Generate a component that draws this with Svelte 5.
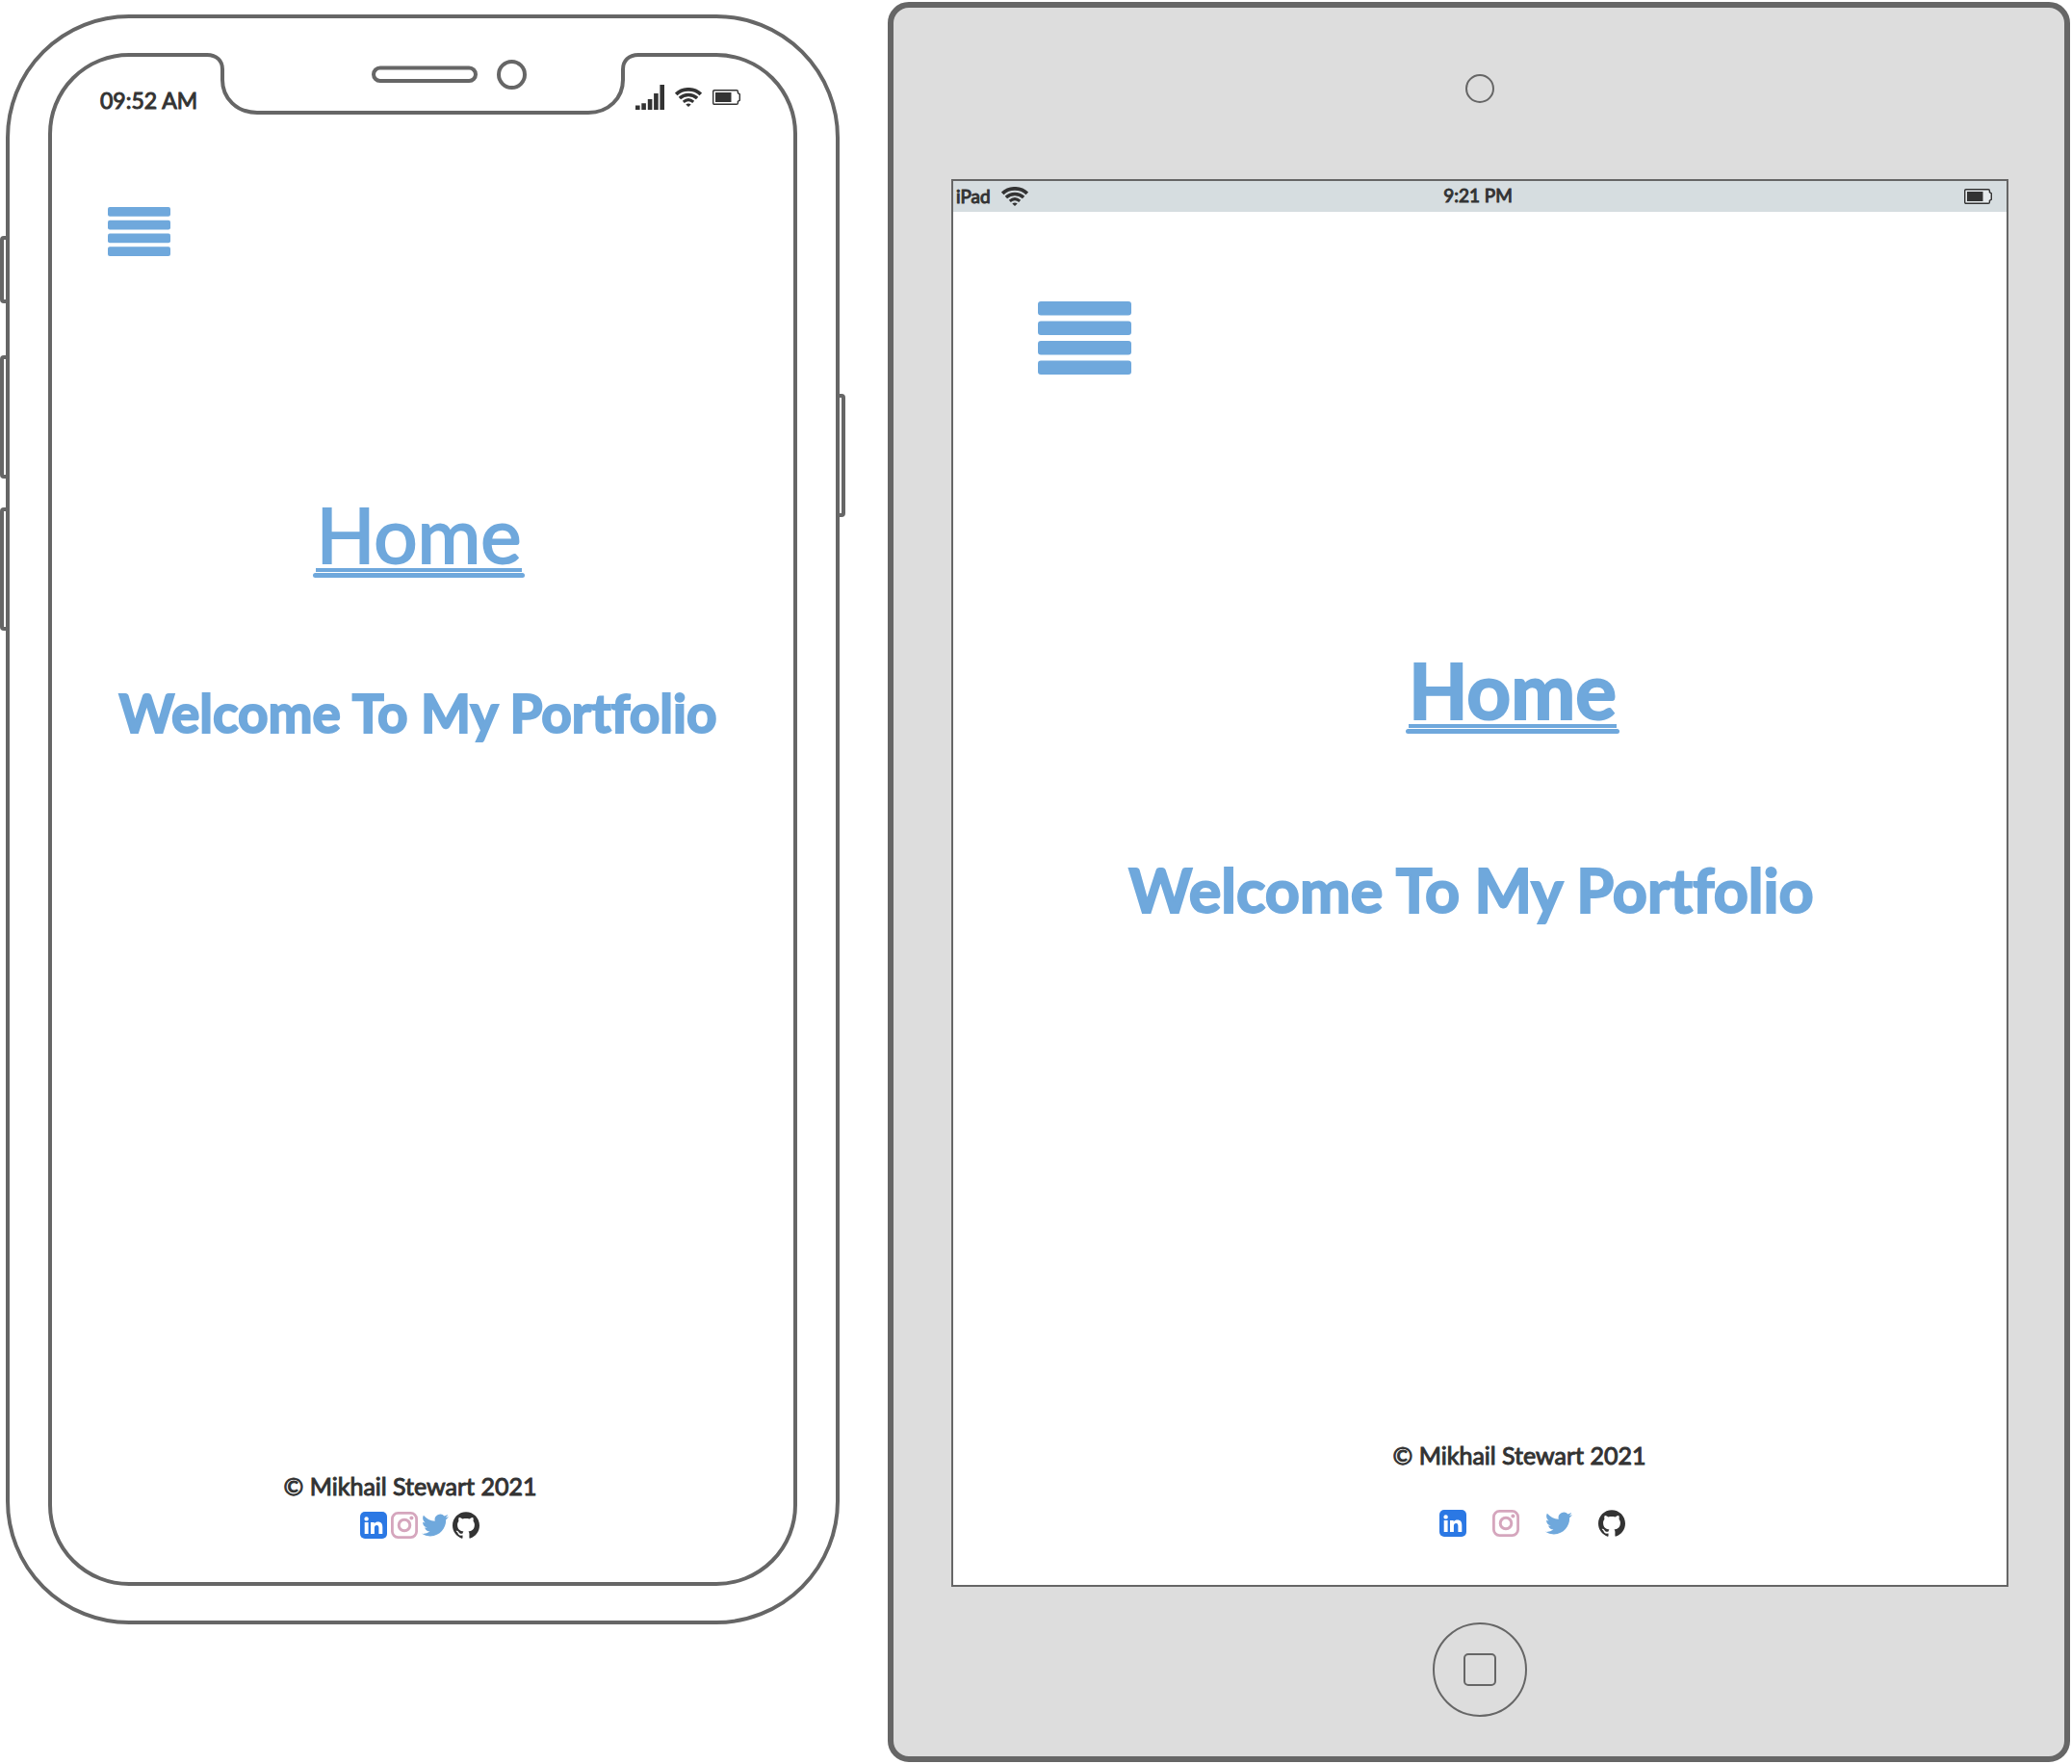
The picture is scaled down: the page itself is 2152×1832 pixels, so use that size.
<script>
  const socials = ['LinkedIn', 'Instagram', 'Twitter', 'GitHub'];
</script>

{#snippet wifi()}
  <svg class="wifi" viewBox="0 0 28 20" role="img" aria-label="Wi-Fi">
    <path d="M1.2 6.9C8 .2 20 .2 26.8 6.9" fill="none" stroke="currentColor" stroke-width="3.8" />
    <path d="M4.9 11C10.2 6.2 17.8 6.2 23.1 11" fill="none" stroke="currentColor" stroke-width="3.5" />
    <path d="M8.8 14.9C12 12.1 16 12.1 19.2 14.9" fill="none" stroke="currentColor" stroke-width="3" />
    <path d="M11.3 17.4Q14 15.4 16.7 17.4L14 20Z" fill="currentColor" />
  </svg>
{/snippet}

{#snippet battery()}
  <svg class="battery" viewBox="0 0 29 16" role="img" aria-label="Battery">
    <path d="M2 .7H25Q26.4 .7 26.4 2V3.6L28.3 4.8V11.2L26.4 12.4V14Q26.4 15.3 25 15.3H2Q.7 15.3 .7 14V2Q.7 .7 2 .7Z" fill="#fff" fill-opacity=".4" stroke="currentColor" stroke-width="1.4" />
    <path d="M3 3H19.5V13H3Z" fill="currentColor" />
  </svg>
{/snippet}

{#snippet menu()}
  <button class="menu" type="button" aria-label="Menu">
    <svg viewBox="0 0 97 76" aria-hidden="true">
      <rect width="97" height="14.5" rx="3" />
      <rect y="20.5" width="97" height="14.5" rx="3" />
      <rect y="41" width="97" height="14.5" rx="3" />
      <rect y="61.5" width="97" height="14.5" rx="3" />
    </svg>
  </button>
{/snippet}

{#snippet footer()}
  <footer>
    <p>© Mikhail Stewart 2021</p>
    <nav aria-label="Social links">
      {#each socials as name}
        <a href="#{name.toLowerCase()}" aria-label={name}>
          {#if name === 'LinkedIn'}
            <svg viewBox="0 0 28 28">
              <rect width="28" height="28" rx="5" fill="#2b78e4" />
              <circle cx="6.6" cy="7.4" r="2.2" fill="#fff" />
              <path d="M4.7 10.9H8.6V23H4.7ZM11 10.9H14.7V12.6C15.6 11.2 17 10.6 18.7 10.6C22 10.6 23.3 12.7 23.3 16V23H19.4V16.8C19.4 15 18.8 13.9 17.3 13.9C15.7 13.9 14.9 15.1 14.9 16.8V23H11Z" fill="#fff" />
            </svg>
          {:else if name === 'Instagram'}
            <svg viewBox="0 0 28 28" fill="none" stroke="#d5a6bd">
              <rect x="1.4" y="1.4" width="25.2" height="25.2" rx="6" stroke-width="2.8" />
              <circle cx="14" cy="14" r="5.8" stroke-width="3" />
              <circle cx="21.4" cy="6.6" r="2" fill="#d5a6bd" stroke="none" />
            </svg>
          {:else if name === 'Twitter'}
            <svg viewBox="0 0 24 24" fill="#6fa8dc">
              <path d="M23.954 4.569a10 10 0 0 1-2.825.775 4.958 4.958 0 0 0 2.163-2.723c-.951.555-2.005.959-3.127 1.184a4.92 4.92 0 0 0-8.384 4.482C7.691 8.094 4.066 6.13 1.64 3.161a4.822 4.822 0 0 0-.666 2.475c0 1.71.87 3.213 2.188 4.096a4.904 4.904 0 0 1-2.228-.616v.061a4.923 4.923 0 0 0 3.946 4.827 4.996 4.996 0 0 1-2.212.085 4.937 4.937 0 0 0 4.604 3.417 9.868 9.868 0 0 1-6.102 2.105c-.39 0-.779-.023-1.17-.067a13.995 13.995 0 0 0 7.557 2.209c9.054 0 13.999-7.496 13.999-13.986 0-.209 0-.42-.015-.63a9.936 9.936 0 0 0 2.46-2.548z" />
            </svg>
          {:else}
            <svg viewBox="0 0 24 24" fill="#333">
              <path d="M12 .297c-6.63 0-12 5.373-12 12 0 5.303 3.438 9.8 8.205 11.385.6.113.82-.258.82-.577 0-.285-.01-1.04-.015-2.04-3.338.724-4.042-1.61-4.042-1.61C4.422 18.07 3.633 17.7 3.633 17.7c-1.087-.744.084-.729.084-.729 1.205.084 1.838 1.236 1.838 1.236 1.07 1.835 2.809 1.305 3.495.998.108-.776.417-1.305.76-1.605-2.665-.3-5.466-1.332-5.466-5.93 0-1.31.465-2.38 1.235-3.22-.135-.303-.54-1.523.105-3.176 0 0 1.005-.322 3.3 1.23.96-.267 1.98-.399 3-.405 1.02.006 2.04.138 3 .405 2.28-1.552 3.285-1.23 3.285-1.23.645 1.653.24 2.873.12 3.176.765.84 1.23 1.91 1.23 3.22 0 4.61-2.805 5.625-5.475 5.92.42.36.81 1.096.81 2.22 0 1.606-.015 2.896-.015 3.286 0 .315.21.69.825.57C20.565 22.092 24 17.592 24 12.297c0-6.627-5.373-12-12-12" />
            </svg>
          {/if}
        </a>
      {/each}
    </nav>
  </footer>
{/snippet}

<main>
  <section class="phone" aria-label="Phone">
    <span class="key mute"></span>
    <span class="key up"></span>
    <span class="key down"></span>
    <span class="key power"></span>
    <div class="screen">
      <header>
        <time>09:52 AM</time>
        <svg class="notch" viewBox="0 0 458 66" aria-hidden="true" fill="#fff" stroke="#666" stroke-width="4">
          <path d="M5 0V2C15 2 21 8 21 17V28C21 47 36 62 57 62H401C422 62 437 47 437 28V17C437 8 443 2 453 2V0Z" stroke="none" />
          <path d="M5 2C15 2 21 8 21 17V28C21 47 36 62 57 62H401C422 62 437 47 437 28V17C437 8 443 2 453 2" fill="none" />
          <rect x="178" y="15.5" width="106" height="13.5" rx="6.75" />
          <circle cx="321.5" cy="22.5" r="13.5" />
        </svg>
        <div class="icons">
          <svg class="signal" viewBox="0 0 30 26" role="img" aria-label="Signal" fill="currentColor">
            <path d="M0 21.5H4.6V26H0ZM6.3 19.3H10.9V26H6.3ZM12.8 15H17.4V26H12.8ZM19.1 9H23.7V26H19.1ZM25.4 0H30V26H25.4Z" />
          </svg>
          {@render wifi()}
          {@render battery()}
        </div>
      </header>
      {@render menu()}
      <h1><span>Home</span></h1>
      <h2>Welcome To My Portfolio</h2>
      {@render footer()}
    </div>
  </section>

  <section class="tablet" aria-label="Tablet">
    <span class="camera"></span>
    <div class="screen">
      <header>
        <div class="carrier">iPad {@render wifi()}</div>
        <time>9:21 PM</time>
        {@render battery()}
      </header>
      {@render menu()}
      <h1><span>Home</span></h1>
      <h2>Welcome To My Portfolio</h2>
      {@render footer()}
    </div>
    <button class="home" type="button" aria-label="Home button"><span></span></button>
  </section>
</main>

<style>
  :global(body) {
    background: #fff;
  }

  main {
    display: grid;
    grid-template-columns: minmax(0, 866fr) minmax(0, 1228fr);
    gap: 50px;
    align-items: start;
    padding: 2px 2px 2px 6px;
    font-family: Lato, 'Open Sans', sans-serif;
    font-variant-ligatures: none;
    color: #333;
  }

  main, section, div, header, button, span {
    box-sizing: border-box;
  }

  svg {
    display: block;
    flex: none;
  }

  section, .screen {
    display: flex;
    flex-direction: column;
  }

  .screen {
    flex: 1;
    background: #fff;
  }

  .phone {
    position: relative;
    aspect-ratio: 866 / 1672;
    margin-top: 13px;
    padding: 36px 40px;
    border: 4px solid #666;
    border-radius: 128px;
  }

  .phone .screen {
    border: 4px solid #666;
    border-radius: 84px;
    padding-bottom: 45px;
  }

  .key {
    position: absolute;
    left: -10px;
    width: 10px;
    height: 128px;
    border: 4px solid #666;
    border-radius: 4px;
  }

  .mute {
    top: 226px;
    height: 70px;
  }

  .up {
    top: 350px;
  }

  .down {
    top: 508px;
  }

  .power {
    top: 390px;
    right: -10px;
    left: auto;
  }

  header, footer p {
    -webkit-text-stroke: 1px currentColor;
  }

  .phone header {
    display: grid;
    grid-template-columns: 1fr auto 1fr;
  }

  .phone time {
    padding: 31px 0 0 50px;
    font-size: 23px;
    line-height: 28px;
    white-space: nowrap;
  }

  .notch {
    width: 458px;
    height: 66px;
    margin: -4px -12px 0;
  }

  .icons {
    display: flex;
    align-items: center;
    align-self: start;
    gap: 11px;
    height: 26px;
    margin: 29px 0 0 4px;
  }

  .signal {
    width: 30px;
    height: 26px;
  }

  .wifi {
    width: 28px;
    height: 20px;
  }

  .battery {
    width: 29px;
    height: 16px;
  }

  .menu {
    align-self: flex-start;
    width: 65px;
    margin: 94px 0 0 58px;
    padding: 0;
    border: 0;
    background: none;
    fill: #6fa8dc;
  }

  h1, h2 {
    margin: 0;
    color: #6fa8dc;
    text-align: center;
    white-space: nowrap;
    -webkit-text-stroke: 2px currentColor;
  }

  h1 {
    display: flex;
    flex-direction: column;
    align-self: center;
    margin: 252px 8px 0 0;
    font-size: 80px;
    font-weight: 400;
    line-height: 72px;
  }

  h1 span {
    border-bottom: 4px solid #6fa8dc;
  }

  h1::after {
    content: '';
    height: 5px;
    margin: 1px -3px 0;
    border-radius: 3px;
    background: #6fa8dc;
  }

  h2 {
    margin: 108px 10px 0 0;
    font-size: 55px;
    line-height: 64px;
  }

  footer {
    display: flex;
    flex-direction: column;
    align-items: center;
    gap: 11px;
    margin-top: auto;
    padding-right: 6px;
  }

  footer p {
    margin: 0 20px 0 0;
    font-size: 25px;
    line-height: 32px;
  }

  nav {
    display: flex;
    gap: 4px;
  }

  nav svg {
    width: 28px;
    height: 28px;
  }

  .tablet {
    aspect-ratio: 1228 / 1828;
    padding: 69px 58px 41px 60px;
    border: 6px solid #666;
    border-radius: 22px;
    background: #ddd;
  }

  .camera {
    align-self: center;
    width: 30px;
    height: 30px;
    border: 2px solid #666;
    border-radius: 50%;
  }

  .tablet .screen {
    margin: 79px 0 37px;
    padding-bottom: 50px;
    border: 2px solid #666;
  }

  .tablet header {
    display: grid;
    grid-template-columns: 1fr auto 1fr;
    align-items: center;
    height: 32px;
    padding: 0 15px 0 3px;
    background: #d6dde0;
    font-size: 19px;
    line-height: 24px;
  }

  .tablet time {
    padding: 0 0 2px 8px;
  }

  .carrier {
    display: flex;
    align-items: center;
    gap: 11px;
  }

  .tablet header > .battery {
    justify-self: end;
  }

  .tablet .menu {
    width: 97px;
    margin: 93px 0 0 88px;
  }

  .tablet h1 {
    margin: 291px 0 0 68px;
    font-weight: 700;
  }

  .tablet h2 {
    margin: 126px 18px 0 0;
    font-size: 63px;
    line-height: 72px;
  }

  .tablet footer {
    gap: 41px;
    padding: 0 0 0 108px;
  }

  .tablet footer p {
    margin-right: 26px;
  }

  .tablet nav {
    gap: 27px;
  }

  .home {
    display: grid;
    place-items: center;
    align-self: center;
    width: 98px;
    height: 98px;
    padding: 0;
    border: 2px solid #666;
    border-radius: 50%;
    background: none;
  }

  .home span {
    width: 34px;
    height: 34px;
    border: 2px solid #666;
    border-radius: 5px;
  }
</style>
